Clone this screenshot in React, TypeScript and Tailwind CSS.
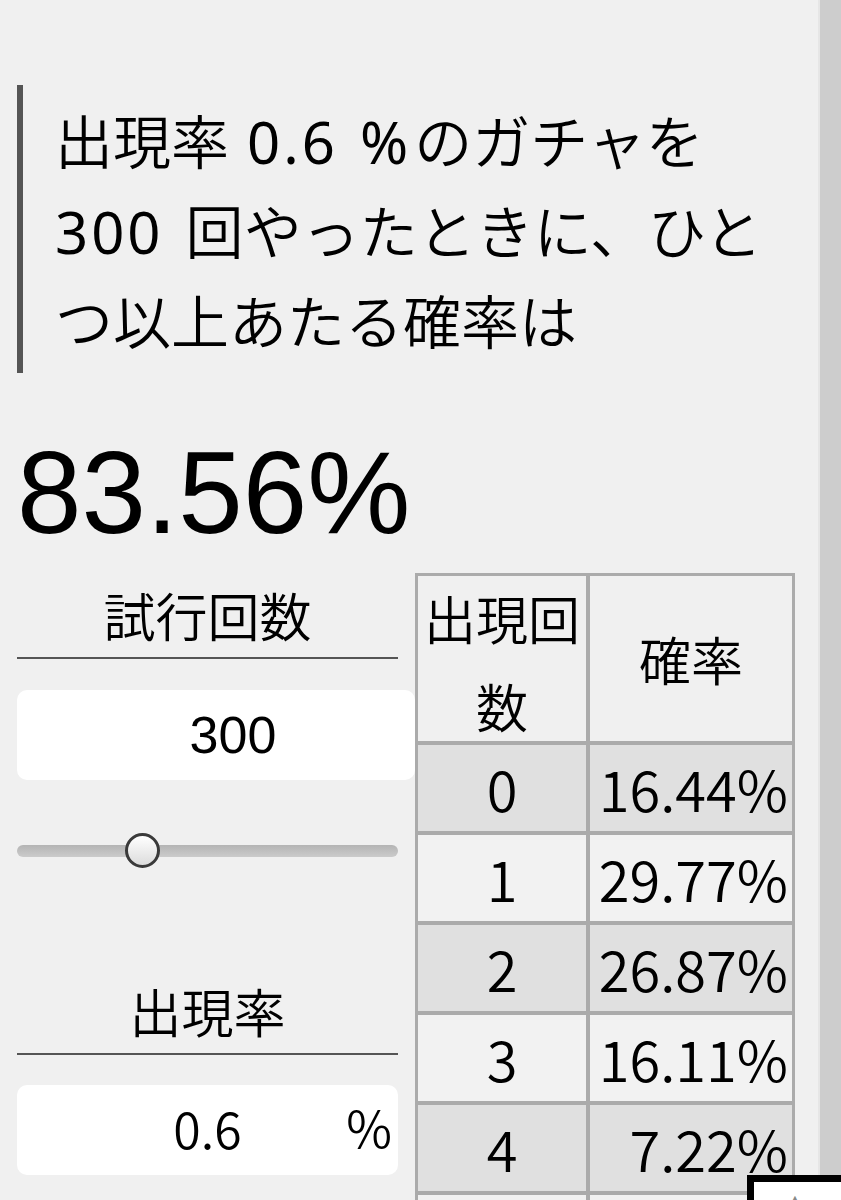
import React from "react";

const jp = '"Noto Sans CJK JP", "Noto Sans", sans-serif';
const mix = '"Noto Sans", "Noto Sans CJK JP", sans-serif';
const helv = '"Liberation Sans", Arial, sans-serif';

const rows: [string, string, boolean][] = [
  ["0", "16.44%", true],
  ["1", "29.77%", false],
  ["2", "26.87%", true],
  ["3", "16.11%", false],
  ["4", "7.22%", true],
  ["5", "2.59%", false],
];

export default function App() {
  return (
    <div className="relative flex w-[841px] h-[1200px] overflow-hidden bg-[#f0f0f0]">
      <div className="w-[818px] shrink-0 bg-[#f0f0f0] text-black" style={{ fontFamily: jp }}>
        <div className="pt-[85px] pl-[17px]">
          <div
            className="border-l-[6px] border-[#555555] pl-[32px] pt-[12px] pb-[6px] text-[58px] leading-[90px] font-[350] whitespace-nowrap"
            style={{ fontFamily: mix }}
          >
            出現率<span className="font-normal tracking-[3px]"> 0.6 </span><span className="font-normal pl-[4px] pr-[6px]">%</span>のガチャを
            <br />
            <span className="font-normal tracking-[3px]">300 </span><span className="pl-[4px]">回</span>やったときに、ひと
            <br />
            つ以上あたる確率は
          </div>
        </div>

        <div
          className="mt-[63px] pl-[17px] text-[116px] leading-[115px] font-normal"
          style={{ fontFamily: helv }}
        >
          83.56%
        </div>

        <div className="flex mt-[22px]">
          <div className="w-[398px] shrink-0 pl-[17px]">
            <div className="w-[381px] h-[84px] flex items-center justify-center text-[52px] leading-none font-[350]">
              試行回数
            </div>
            <div className="w-[381px] h-[2px] bg-[#555555]" />
            <div
              className="mt-[31px] w-[398px] h-[90px] rounded-[10px] bg-white flex items-center justify-center pl-[34px] text-[52px]"
              style={{ fontFamily: helv }}
            >
              300
            </div>
            <div className="relative mt-[53px] w-[381px] h-[35px] flex items-center">
              <div className="w-full h-[12px] rounded-full bg-gradient-to-b from-[#b4b4b4] to-[#cbcbcb]" />
              <div className="absolute left-[108px] top-0 w-[35px] h-[35px] rounded-full border-[3px] border-[#3a3a3a] bg-gradient-to-b from-white to-[#dcdcdc]" />
            </div>
            <div className="mt-[101px] w-[381px] h-[84px] flex items-center justify-center text-[52px] leading-none font-[350]">
              出現率
            </div>
            <div className="w-[381px] h-[2px] bg-[#555555]" />
            <div
              className="relative mt-[30px] w-[381px] h-[90px] rounded-[10px] bg-white flex items-center justify-center text-[50px] font-[350]"
              style={{ fontFamily: jp }}
            >
              <span className="-mt-[6px]">0.6</span>
              <span className="absolute right-[6px] top-[4px] text-[50px]">%</span>
            </div>
          </div>

          <div className="ml-[17px]">
            <table
              className="table-fixed border-separate border-spacing-0 border border-[#ababab] w-[380px] text-[56px] font-[350]"
              style={{ fontFamily: jp }}
            >
              <colgroup>
                <col className="w-[172px]" />
                <col className="w-[206px]" />
              </colgroup>
              <thead>
                <tr>
                  <th className="h-[169px] border-2 border-[#ababab] bg-[#f0f0f0] font-[350] text-[52px] text-center align-middle p-0">
                    <div className="h-[165px] flex flex-col justify-center items-center leading-[88px] pt-[6px]">
                      <span className="whitespace-nowrap">出現回</span>
                      <span>数</span>
                    </div>
                  </th>
                  <th className="h-[169px] border-2 border-[#ababab] bg-[#f0f0f0] font-[350] text-[52px] text-center align-middle p-0 leading-none">
                    確率
                  </th>
                </tr>
              </thead>
              <tbody>
                {rows.map(([n, p, dark]) => (
                  <tr key={n}>
                    <td
                      className={
                        "h-[90px] border-2 border-[#ababab] text-center align-middle p-0 leading-none " +
                        (dark ? "bg-[#e0e0e0]" : "bg-[#f2f2f2]")
                      }
                    >
                      {n}
                    </td>
                    <td
                      className={
                        "h-[90px] border-2 border-[#ababab] text-right align-middle pr-[4px] leading-none " +
                        (dark ? "bg-[#e0e0e0]" : "bg-[#f2f2f2]")
                      }
                    >
                      {p}
                    </td>
                  </tr>
                ))}
              </tbody>
            </table>
          </div>
        </div>
      </div>
      <div className="w-[2px] shrink-0 bg-[#e6e6e6]" />
      <div className="flex-1 bg-[#cdcdcd]" />

      <div className="absolute left-[747px] top-[1175px] w-[110px] h-[60px] border-[7px] border-black bg-white flex justify-center">
        <span className="text-[14px] text-[#888] leading-none mt-[10px] -ml-[14px]" style={{ fontFamily: helv }}>
          ▲
        </span>
      </div>
    </div>
  );
}
